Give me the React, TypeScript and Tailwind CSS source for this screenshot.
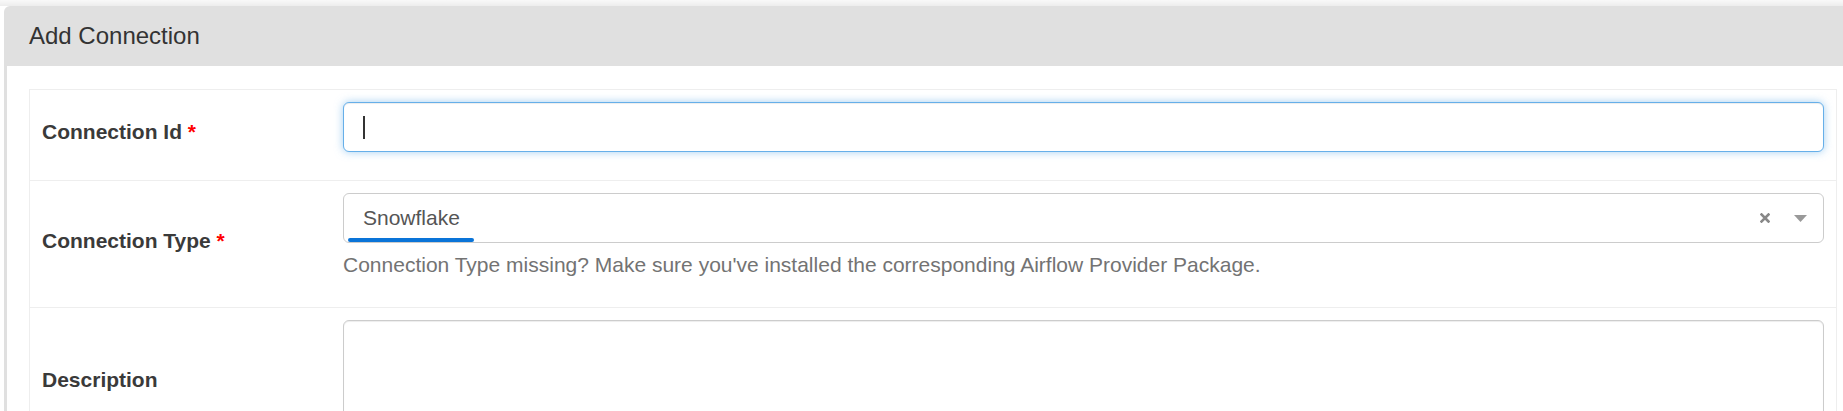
import React from "react";

function Label({ text, required }: { text: string; required?: boolean }) {
  return (
    <div className="mb-[7px] text-[21px] font-bold leading-[30px] text-[#3a3a3a]">
      {text}
      {required && <span className="text-[#ff0000]"> *</span>}
    </div>
  );
}

export default function App() {
  return (
    <div
      className="h-[411px] w-full overflow-hidden bg-white"
      style={{ fontFamily: '"Liberation Sans", Arial, Helvetica, sans-serif' }}
    >
      <div className="h-[6px] bg-gradient-to-b from-[#f9f9f9] to-[#ededed]" />
      <div className="ml-[4px]">
        <div className="flex h-[60px] items-center rounded-tl-[6px] bg-[#e0e0e0] pl-[25px] text-[24px] text-[#333]">
          Add Connection
        </div>
        <div className="border-l-[3px] border-[#e0e0e0] bg-white pr-[6px] pl-[22px] pt-[23px]">
          <div className="border border-[#eeeeee]">
            {/* Row 1 */}
            <div className="flex">
              <div className="flex w-[301px] shrink-0 items-center px-[12px]">
                <Label text="Connection Id" required />
              </div>
              <div className="flex-1 px-[12px] pt-[12px] pb-[28px]">
                <div className="relative h-[50px] rounded-[6px] border border-[#66afe9] bg-white shadow-[inset_0_1px_1px_rgba(0,0,0,0.075),0_0_8px_rgba(102,175,233,0.6)]">
                  <div className="absolute top-[13px] left-[19px] h-[23px] w-[2px] bg-[#333]" />
                </div>
              </div>
            </div>
            {/* Row 2 */}
            <div className="flex border-t border-[#eeeeee]">
              <div className="flex w-[301px] shrink-0 items-center px-[12px]">
                <Label text="Connection Type" required />
              </div>
              <div className="flex-1 px-[12px] pt-[12px] pb-[12px]">
                <div className="relative flex h-[50px] items-center rounded-[6px] border border-[#cccccc] bg-white">
                  <span className="pl-[19px] text-[21px] text-[#555]">Snowflake</span>
                  <div className="absolute top-[44px] left-[4px] h-[4px] w-[126px] rounded-full bg-[#0a74d8]" />
                  <div className="ml-auto flex items-center">
                    <svg width="10" height="10" viewBox="0 0 10 10" className="mr-[24px]">
                      <path d="M1.5 1.5 L8.5 8.5 M8.5 1.5 L1.5 8.5" stroke="#888" strokeWidth="2.6" strokeLinecap="square" />
                    </svg>
                    <svg width="13" height="7" viewBox="0 0 13 7" className="mr-[16px]">
                      <path d="M0 0 L13 0 L6.5 7 Z" fill="#999" />
                    </svg>
                  </div>
                </div>
                <div className="mt-[7px] mb-[15px] text-[21px] leading-[30px] text-[#737373]">
                  Connection Type missing? Make sure you've installed the corresponding Airflow Provider Package.
                </div>
              </div>
            </div>
            {/* Row 3 */}
            <div className="flex border-t border-[#eeeeee]">
              <div className="flex w-[301px] shrink-0 items-center px-[12px]">
                <Label text="Description" />
              </div>
              <div className="flex-1 px-[12px] pt-[12px] pb-[27px]">
                <div className="h-[111px] rounded-[6px] border border-[#cccccc] bg-white shadow-[inset_0_1px_1px_rgba(0,0,0,0.075)]" />
              </div>
            </div>
          </div>
        </div>
      </div>
    </div>
  );
}
